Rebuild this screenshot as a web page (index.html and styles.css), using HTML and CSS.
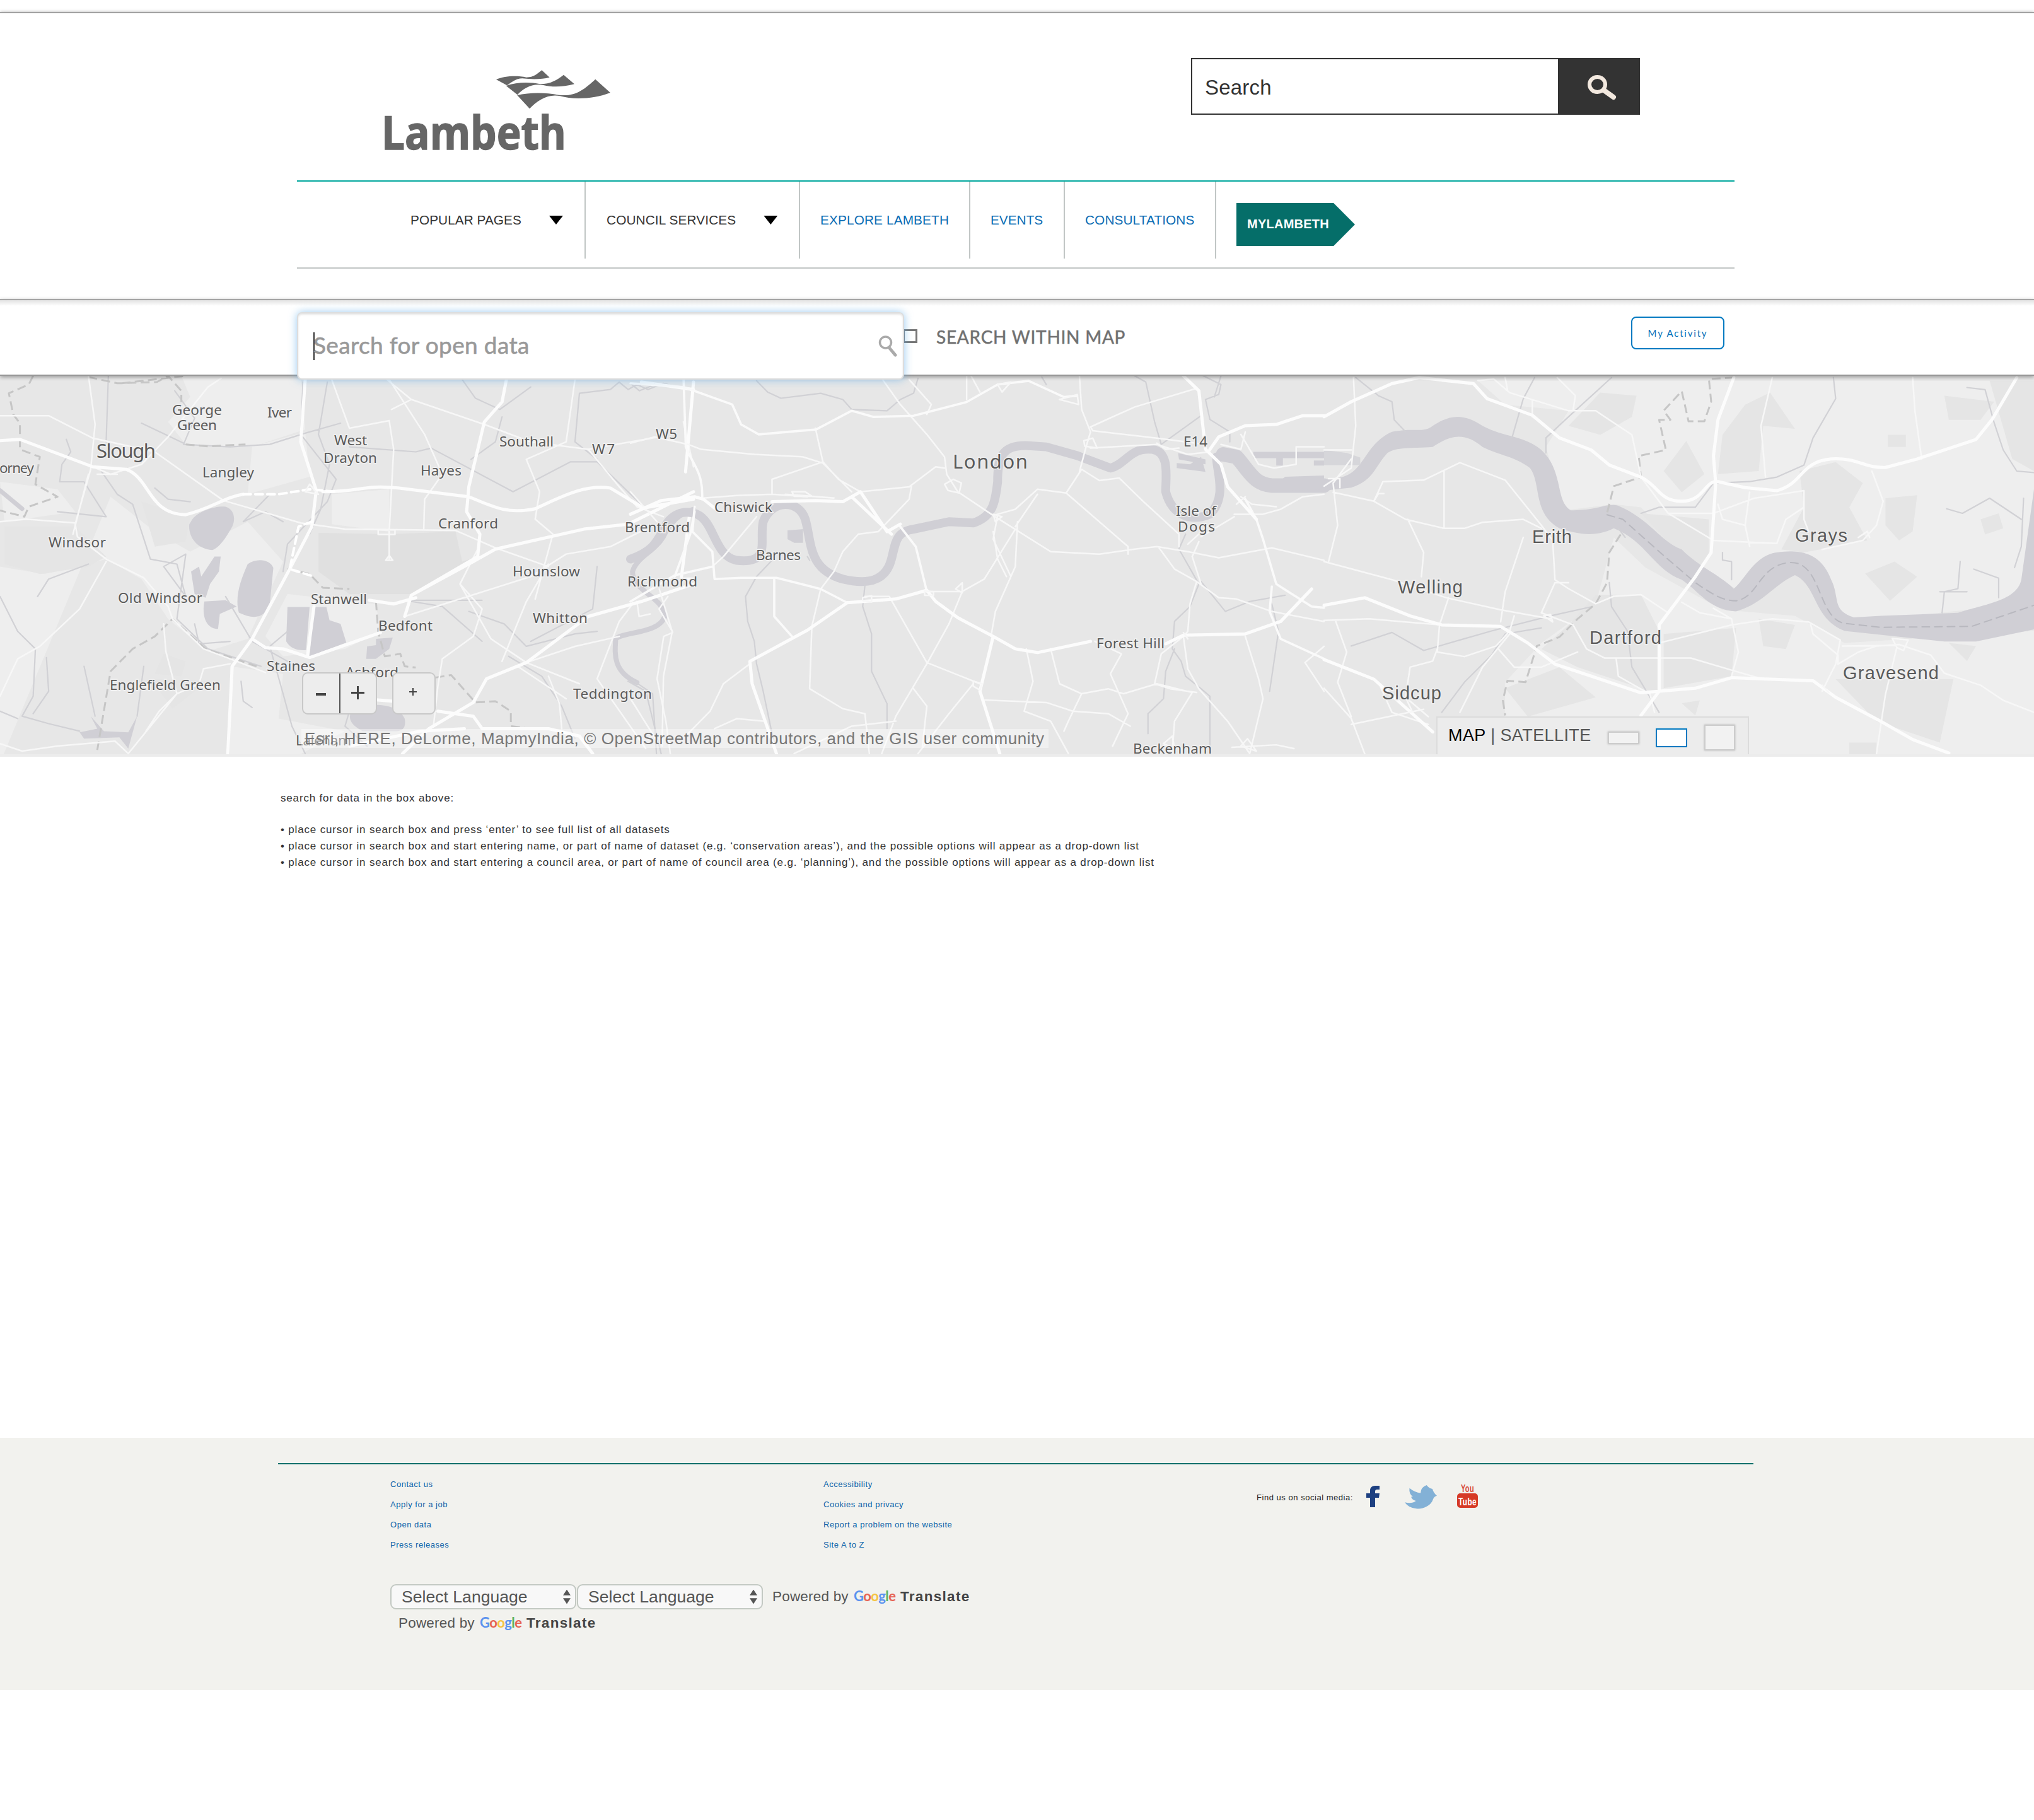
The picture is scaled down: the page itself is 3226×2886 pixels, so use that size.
FILE: index.html
```html
<!DOCTYPE html>
<html lang="en">
<head>
<meta charset="utf-8">
<title>Lambeth Open Data</title>
<link rel="stylesheet" href="styles.css">
</head>
<body>
<header class="site-header">
  <div class="masthead">
    <svg class="logo" viewBox="600 100 380 145" role="img" aria-label="Lambeth">
      <g transform="translate(580 80) scale(.3333)" fill="#666">
        <path d="M621 138C660 122 715 118 765 128C800 128 815 112 838 94L875 128C840 138 790 138 745 133C715 133 695 152 672 166Z"/>
        <path d="M668 168C715 152 775 148 830 160C880 160 910 140 942 116L993 160C940 174 890 176 845 165C790 156 752 180 722 211Z"/>
        <path d="M721 213C775 200 850 198 920 212C1000 220 1040 185 1093 137L1164 201C1090 230 990 236 925 217C870 205 820 235 780 277Z"/>
      </g>
      <text x="605" y="236.500" textLength="293" lengthAdjust="spacingAndGlyphs">Lambeth</text>
    </svg>
    <form class="site-search">
      <span class="site-search-text">Search</span>
      <span class="site-search-button">
        <svg width="48" height="42" viewBox="0 0 48 42" fill="none" stroke="#f3e9df" stroke-linecap="round"><ellipse cx="16.500" cy="16" rx="12.500" ry="12" stroke-width="6"/><path d="M28 26L42 36" stroke-width="8"/></svg>
      </span>
    </form>
  </div>
  <nav class="main-nav">
    <ul>
      <li class="popular">POPULAR PAGES<i class="arrow"></i></li>
      <li class="services">COUNCIL SERVICES<i class="arrow"></i></li>
      <li class="explore"><a>EXPLORE LAMBETH</a></li>
      <li class="events"><a>EVENTS</a></li>
      <li class="consult"><a>CONSULTATIONS</a></li>
      <li class="account"><a class="account-tag">MYLAMBETH</a></li>
    </ul>
  </nav>
</header>

<section class="data-bar">
  <div class="data-search">
    <i class="caret"></i><span class="placeholder">Search for open data</span>
    <svg width="30" height="34" viewBox="0 0 30 34" fill="none" stroke="#aaa"><circle cx="11.500" cy="11" r="9" stroke-width="3.500"/><path d="M17 19L27 31" stroke-width="5" stroke-linecap="round"/></svg>
  </div>
  <i class="checkbox"></i>
  <span class="within">SEARCH WITHIN MAP</span>
  <a class="activity">My Activity</a>
</section>

<section class="map">
  <svg class="map-canvas" viewBox="0 596 3226 604" preserveAspectRatio="none">
    <rect y="596" width="3226" height="604" fill="#e7e7e7"/>
    <!-- western area -->
    <g transform="translate(0 590) scale(.7015 .3954)">
      <path class="open" d="M410 15H680L690 230L570 300L420 290L380 200L430 100ZM570 300L690 240L700 420L560 490ZM0 440L130 470L170 560L10 600ZM250 500L350 640L430 720L560 600L640 760L560 1070L470 1120L380 990L320 830L240 750L180 780L100 810L0 780V1568H520V1180L640 1210L630 1390L780 1440L640 1568H0ZM750 490L880 470V640L750 610ZM650 890L850 930L860 1040L780 1110L640 1140L600 1060Z"/>
      <path class="field" d="M10 620H170L240 740L200 780L90 810L10 770ZM320 520L430 580L420 680L350 700ZM370 1130L420 1160L410 1220L350 1210ZM340 1230L470 1240L390 1350Z"/>
      <path class="airport" d="M720 645L880 650L1030 640L1045 760L1080 740L930 890L790 890L720 800Z"/>
      <path class="lake" d="M435 590C450 555 490 535 510 540C530 550 533 590 525 620C515 650 500 700 480 714C445 710 425 660 428 610ZM485 740L499 740L495 800L475 850L465 905L440 890L432 800L450 780L455 820ZM560 770C580 745 610 750 618 785L610 930C600 985 575 995 540 965C530 900 545 830 560 770ZM462 920L510 915L535 940L497 970L493 1030C470 1030 455 990 462 920ZM650 942H700L692 1115Q660 1120 647 1080ZM710 942H738L745 995L770 1010L783 1085L700 1140ZM830 1100L850 1095V1070L888 1065L880 1110L850 1150H828ZM800 1345C850 1325 900 1330 915 1390Q920 1440 895 1440H820Q775 1400 800 1345ZM180 1445L220 1430L205 1380L235 1440L290 1445L310 1380L290 1510L270 1465L190 1470Z"/>
      <path class="stream" d="M245 15L240 280M320 205L415 285M415 290L440 185L395 75M415 290L520 300L610 290L690 245L770 205M685 40L680 250L760 430L740 520L650 690L640 800M740 40L720 250L745 370L725 550L700 650M1045 30L1075 105L1130 150L1200 60M790 300L940 320L975 305L1160 480L1290 360L1350 360L1455 540M1135 180L1120 280L1065 350M150 270L160 320L140 370L135 440L190 440L240 580L130 560M230 400L265 490L300 530L340 750L400 770L420 900L370 780L420 730L400 990L470 1110L590 1180M610 490L550 600L600 560L640 600M510 900L570 1080L650 1160M0 900L40 1040L80 1110L75 1300L50 1380L110 1410L180 1440M200 770L110 830L85 900M105 1145L110 1280L75 1370M190 1180L215 1380M325 1180L310 1380M350 465L380 510L430 520M1150 1140L1225 1220L1270 1340L1300 1470M1060 960L1140 1010L1190 1100L1300 1050L1350 1040M1350 780L1340 950L1200 1080M1420 1240L1460 1280L1500 1568M920 915H1090M930 920L1000 940L1090 1080M1310 85L1380 70L1400 40L1420 70L1440 50L1465 70L1500 45L1510 50M1310 85L1300 280L1350 350M650 1040L610 1100L640 1290L660 1420L690 1530M545 1240L550 1320L570 1345M440 1010L450 1090L520 1080M0 1360L40 1390M790 1360L780 1420L830 1500"/>
      <path class="bound" d="M75 15L65 50L20 85L30 170L45 205V310L90 340L80 450L130 500L65 540L55 580L0 555M200 20L265 45L355 40L380 15L410 75L410 120M420 290L470 298L555 290M650 790L700 810L730 865L790 870M850 920L855 1040L870 1140L905 1130L915 1180L940 1185M985 1225L1020 1215L1075 1325L1120 1320L1155 1360V1420L1200 1430M215 1568L250 1200L300 1110L350 1060L390 990L465 1110L580 1180M275 45L420 15"/>
      <path class="river" d="M1568 550C1530 570 1510 620 1500 660C1480 720 1440 740 1430 800C1430 880 1500 900 1503 980C1490 1050 1410 1040 1392 1070C1390 1130 1385 1200 1440 1245"/>
      <path class="canal" d="M0 475L50 548"/>
      <path class="minor" d="M200 15L215 210L205 390L170 610L175 660L240 750L325 825L380 940L390 990L460 1110L535 1160L600 1205M240 760L180 950L90 1100L40 1150L0 1300M500 25L470 60L380 260L320 370L250 410L210 380M0 175H110L210 265L350 320L505 515L680 605L780 630L1030 635L1120 705L1240 780M0 600L60 590L170 605M875 30L930 110L1095 210L1200 280L1330 310L1490 260M750 30L790 225L880 195L890 310L880 640V750M885 150L930 110M880 30L960 250L1000 410L960 510L958 635M1300 30L1280 280L1190 350L1220 480L1210 590L1250 650L1210 910M1545 200L1568 380M1330 310L1400 460L1440 540L1500 580M1240 770L1190 920L1135 1160M915 980L1200 820L1280 730L1380 700L1470 620M1040 850L1110 1070L1190 1165L1310 1250M1080 710L1040 850L1090 950L1070 1060L1000 1150L990 1260L980 1420M1430 930L1400 1000L1350 1230L1460 1510M1400 1060L1300 1100L1190 1165M1510 900L1490 950L1520 1040L1500 1220L1497 1500M370 1010L375 1120L400 1290L290 1530M520 1170L460 1190L450 1250L400 1290L360 1360L330 1440M0 1490L50 1520L130 1500L260 1480L290 1530M1240 1220L1265 1330L1270 1430M200 410L165 650M1440 920L1445 980L1470 970M1170 1180L1280 1310"/>
      <path class="major" d="M0 275L45 270L210 380L285 390C340 425 335 570 420 572C480 545 510 500 550 490M730 480C820 480 820 450 900 465L1060 500C1120 545 1150 570 1210 548C1270 500 1320 450 1380 465L1455 545L1568 510M690 30L680 280L715 475L705 620L655 790L570 1070L525 1180L515 1530M1145 30L1135 120L1095 200L1060 460L1055 560L1085 650L1080 740L930 895L915 980M1568 480L1420 610L1320 630L1120 710L1070 760L930 895M570 1070L600 1105L640 1110L700 1145L860 1045M1568 850L1450 920L1330 980L1190 1165L1100 1230L1070 1325L970 1430L910 1530M820 1310L890 1320M990 1360L1070 1380L1090 1430L1240 1430L1310 1460L1340 1530M710 940L695 1140M835 915L890 930L940 905M790 1500L950 1440L1050 1430M1568 830L1540 830L1560 560M1450 40L1568 70M1568 40L1550 400"/>
      <path class="tunnel" d="M550 490H630L700 470L760 480M705 600L675 620L655 790L710 820"/>
      <path class="minor" d="M855 633h38v18h-38zM700 450l20 40l-30-10zM220 410h45M872 755l8-20l8 20z"/>
    </g>
    <!-- central area -->
    <g transform="translate(1000 590) scale(.7015 .3954)">
      <path class="thames a" d="M0 750C50 720 60 680 75 630C90 570 120 550 150 570C190 600 190 740 240 755C320 770 290 680 300 600C320 510 380 510 395 590C410 680 400 790 480 830C550 860 580 820 590 750C600 680 600 640 640 630L720 600L775 605C820 580 825 520 830 440C830 340 840 290 900 295L940 300L1010 335L1085 385C1120 370 1130 300 1180 310C1220 320 1210 420 1210 480C1225 580 1270 600 1310 570C1350 500 1325 400 1325 340"/>
      <path class="thames b" d="M1340 330L1370 340C1400 400 1410 450 1450 455H1568"/>
      <path class="lake" d="M1480 420L1568 415V470L1440 480ZM355 635L390 630V685H370L355 670ZM1238 325L1300 350V370L1240 350ZM1235 365L1265 370L1290 340L1300 400L1235 385ZM1408 320H1568V345H1475V375H1460V345H1408ZM1545 355H1568V375H1545Z"/>
      <path class="stream" d="M285 35L310 80L340 105L430 85L480 110L500 150L580 155L610 110L640 85L650 25M1140 15L1165 40L1185 200L1200 290L1290 175M1295 15L1335 50L1330 90L1300 110L1310 190L1355 240V280M1335 15L1320 100M930 20L940 50M1255 650L1240 710L1285 850L1265 940L1230 1000L1225 1110L1245 1160L1255 1220L1290 1270L1310 1300V1568M1230 1110L1210 1200L1205 1310L1170 1370V1450M320 755L285 820L260 900L265 1000L280 1080L285 1170L300 1280L320 1450L330 1530M530 855L525 940L545 1050L545 1200L580 1330L580 1430M1290 840L1345 960L1400 920L1480 895M1450 930L1465 1040L1445 1280M400 740L405 755M0 1230L50 1290L60 1568M0 45L20 75L55 50"/>
      <path class="minor" d="M0 285L55 260L130 290L160 310L280 330L390 340L435 365L500 480M435 360L320 430V490M418 225L435 360L470 430L520 480L630 460L690 380L710 385M165 505L240 495L320 490L400 500M570 30L610 130L670 250L710 340L715 410L740 480L820 575L950 720L1060 730L1140 710L1190 700L1260 720L1330 745L1450 705L1568 755M630 30L680 130L670 170M830 575L820 670L860 820M875 600L870 780L825 960L815 1060M635 460L630 510L560 640L515 650L480 720L460 800L430 870L410 1020L405 1270L480 1350L530 1370L540 1530M530 900L585 900L670 1165L790 1250M750 880L720 1010L670 1170L600 1380L560 1568M820 575L870 550L920 470L985 485L1125 700V730M985 485L1020 390L1060 435L1105 425L1160 520L1240 650V700M1015 15L1020 150L1040 240L1030 300L1015 400M1280 65L1140 140L1040 220L1045 235L1190 265L1300 290M1040 305L1190 290L1260 330L1310 320M920 490L870 620M820 640L830 750L850 820M870 630L800 830L750 880H670M1195 705L1230 790L1280 840L1265 930L1260 1040L1250 1060L1200 1130L1185 1250L1220 1270L1280 1285M1280 840L1330 905L1370 910L1450 960L1568 1000M1285 680L1270 740L1290 850M1310 610L1260 690M1365 580L1290 660M1365 570L1430 570L1470 550L1520 500L1568 490M1380 500L1405 530L1460 540M1390 1060L1420 1230L1430 1310L1400 1530M1250 1060L1260 1190L1285 1270L1350 1400L1400 1530M1050 1080L1110 1130L1085 1210L1125 1370L1090 1500M895 1110L910 1240L890 1360L950 1400L990 1530M950 1110L970 1250L1020 1290L1080 1270L1115 1290L1190 1250L1270 1285L1230 1400L1225 1520M800 1315L940 1325L1000 1360L1080 1370L1130 1420M1020 1290L990 1400L980 1440M775 1250L720 1370L650 1530M640 1270L670 1340L660 1500M270 1170L210 1250L180 1360L130 1450M300 1400L240 1390L190 1430M370 1530L500 1420L600 1400M0 480L60 600M285 580L210 740L185 780M760 15V110M790 80L770 15M65 870L95 1045L75 1060L60 1230L80 1400L90 1530M0 1310L60 1480M1568 1100L1525 1165L1568 1280M1568 300H1505V370L1455 385L1420 370L1380 250M1390 500L1370 530"/>
      <path class="road2" d="M0 45L120 60L230 130L250 210L290 250L420 230L500 155L550 180L640 175L760 120L830 50L900 35L980 100L1010 95M120 30L125 300C140 370 165 400 162 510M145 540L140 640L185 720L190 830L250 825H330L430 870L490 925M145 560L135 650L100 820M325 825V980L365 1060M610 620L645 700L670 880M1390 510L1415 590L1430 670L1460 850L1540 940L1568 945M1450 860L1445 960L1470 1070L1568 1150M0 920L100 815L185 780"/>
      <path class="major" d="M0 570L70 515L145 500L165 510L200 560M320 520L420 515L480 520L520 480L580 640L610 610M490 925L400 1035L270 1160L275 1250L330 1530M490 925L600 910L670 875L690 920L740 985L820 1060L870 1110L920 1125L1040 1080M820 1060L790 1280L835 1530M1210 1090L1250 1055L1390 1050L1470 1000L1540 870M1250 15L1285 75L1300 310L1335 370L1350 460L1415 590M1310 310L1330 260L1390 215L1460 210L1520 175H1568M500 500L590 650"/>
      <path class="minor" d="M710 450l20-20l18 15l-5 40l-25-10zM365 480h30l15 18h-40zM1025 275l20-10l10 40l-28-8zM525 905l20-8v25l-20-5zM665 878l20 3v14h-20zM735 870l15-25v40zM775 1240l20 10l-5 25l-15-15zM1250 1045l10 25M820 570l20 10l-15 20zM970 110l40-20l3 40zM830 50l10 30l20-40zM1190 285l20 25l30-5M350 490l110 15M1335 290l45 20l10-70M1205 1490l20-30l5 50zM1380 1500l15-30l20 50zM1500 1510l-40-15l-100 10"/>
    </g>
    <!-- estuary -->
    <g transform="translate(2100 460) scale(.7181 .4783)">
      <path class="open" d="M340 300H1568V680L1540 1040L1300 1080L1140 1090L1060 870L1010 880L910 990L820 920L700 720L640 710L530 730L490 520L540 400L400 380ZM640 820L710 920L880 1060L1040 1080L1150 1170L1568 1130V1568H400L400 1300L480 1170L600 1040Z"/>
      <path class="field" d="M610 340L690 350L680 420L610 480L540 450ZM930 380L985 340L1040 460L970 450L960 600L870 610L880 480ZM1050 600L1130 570L1190 640L1160 720L1200 830L1060 870L1010 860L1060 720ZM1240 690L1310 680L1300 800L1270 830L1240 780ZM1245 480H1285V520H1245ZM1195 940L1260 900L1310 950L1250 1030ZM750 600L800 500L840 610L790 670ZM1370 350L1480 370L1450 430H1380ZM1470 300H1568V600L1520 560ZM700 740L850 760V880L820 930ZM600 1010L700 1010L740 1130L740 1340L560 1250L480 1190L540 1110ZM750 1140L910 1120L900 1280L750 1320ZM1130 1290H1390L1360 1500L1220 1430ZM400 1320L520 1250L600 1350L450 1414ZM1450 760L1490 740L1500 790L1460 810ZM1160 1500H1220V1538H1160ZM790 1370L830 1360L820 1410ZM960 1090L1040 1110L1020 1190L970 1180ZM1380 1170L1440 1180L1420 1230Z"/>
      <path class="lake" d="M0 630L40 620C90 600 90 510 150 470C200 455 220 475 240 450C280 410 310 410 350 450C400 490 440 480 480 530C530 600 510 700 545 730C610 730 620 705 650 715C720 760 740 830 790 860C830 920 870 940 905 990C930 960 950 880 1000 870C1060 855 1100 880 1120 960C1140 1020 1120 1060 1170 1085L1230 1080L1400 1070C1460 1040 1530 1030 1540 960L1568 660V1125L1440 1165H1370L1150 1130C1080 1090 1090 980 1040 945C990 980 970 1040 910 1065C850 1060 830 1000 790 960C730 930 710 830 640 790C600 820 560 810 520 790C460 740 480 640 455 590C420 550 390 550 350 520C310 470 280 480 240 520C190 525 160 520 140 540C110 590 110 630 60 655L0 665Z"/>
      <path class="water" d="M0 530L50 540L80 555V580H0Z"/>
      <path class="stream" d="M70 290L120 350L150 370L155 430L180 470M465 290L440 360L415 490M635 290L540 420L490 490V540M1125 290L1130 360L1080 490L1060 580L1000 620L940 635L860 640L820 720L740 720L700 740M1420 323L1460 330L1480 440L1500 530L1530 600L1568 605M1375 725L1410 740L1470 690L1540 760M630 970L635 1050L670 1130L680 1250L740 1400M60 1180L150 1135L220 1195L300 1160L370 1130L500 1080L590 1050M480 1120L400 1140L370 1210L310 1300L260 1400M880 870V895L900 900V960M1405 900L1400 990L1370 1000L1365 1070M1435 925L1490 955V1020M1360 1000H1420M1545 690L1540 850L1525 920M650 790L665 820"/>
      <path class="bound" d="M905 290L850 295L855 370L840 435H805L790 335L750 400L765 430L740 430L755 530L695 550L700 620L640 650L625 740M655 810L630 870L625 970L600 1040L560 1090L520 1150L470 1180L445 1300L405 1295L395 1360L400 1410"/>
      <path class="channel" d="M625 745L660 760L750 880L820 970C860 1010 880 1030 910 1030C960 1020 960 910 1030 903C1100 900 1090 1090 1150 1105L1230 1118L1430 1115L1568 1045"/>
      <path class="minor" d="M65 290L70 450L60 590L0 650M60 560L20 640L30 780L10 900M20 670L110 700L130 635L220 630L300 572L400 630L480 780L505 830L510 960L540 990L600 1040L640 1015L700 1010L760 1070M265 600V790L180 760L110 700M265 790H310L350 770L440 760L480 790M185 760L220 870L215 950M440 820L400 1000L390 1100M540 970L510 970L480 1070L550 1110L580 1190L620 1220H810L900 1260L970 1290M0 900L150 960L270 1020L390 1060L500 1090M275 1020L255 1110L250 1200L310 1215L380 1180L410 1130L420 1080M250 1190L240 1230L190 1250L180 1350L230 1414M0 1095L100 1090L180 1100L260 1110M25 1095L50 1200L30 1300L60 1414M410 1140L350 1250L300 1400M385 1190L420 1250H480L560 1200M340 300L375 295L410 340L540 400L600 400L680 480L700 620L760 740L860 830L1000 840L1020 760L1060 720M400 290L405 330M460 365V420M515 290L555 350L550 400M990 290L965 450L975 620M1300 290L1305 400L1320 560M1210 600L1235 700L1220 780L1190 830L1100 860M760 740H860L950 690L1060 665V760L1070 800M940 670L930 780L940 850M870 710L880 760L930 780M860 1055L900 1090L915 1200L900 1280M790 1035L830 1070L900 1090M740 1170L900 1110L990 1090L1070 1100L1140 1160L1130 1240L1100 1330M1075 1110L1080 1140L1135 1210V1240L1180 1200L1220 1180L1270 1175L1340 1210L1370 1270L1450 1310L1500 1360L1568 1400M1265 1185L1240 1340L1220 1538M1145 1180L1260 1178M120 1300L150 1400L230 1440M0 1320L60 1420L90 1538M180 1350L200 1414M645 1220L650 1280L720 1340L730 1400"/>
      <path class="major" d="M0 420L60 370L150 310L210 290L330 310L360 360L460 415L520 490L590 530L630 580L700 620C740 650 740 700 790 700C840 700 840 630 870 635L930 655L1000 665C1060 640 1050 570 1120 560C1180 555 1190 590 1240 588L1310 560L1440 495L1475 430L1530 290M905 290L870 430L860 550L865 640L855 870L820 950L740 1110V1330M0 1045L90 1020L190 1080L260 1110L390 1115L450 1170L510 1240L590 1280L700 1335L820 1320L900 1285L1080 1295L1130 1350L1230 1430L1300 1490L1380 1535M0 1225L110 1290L240 1465M740 1330L700 1410"/>
      <path class="minor" d="M1255 1155l35 5l-10 35l-15-10zM485 1080l15-5l5 25zM10 625h25v30M110 700l10-25h12M1180 820l20-20l5 20M60 1440l160-50M0 530h60M1100 1310l15 25"/>
    </g>
    <g class="labels">
      <text x="273" y="658" textLength="79">George</text><text x="281" y="682" textLength="63">Green</text>
      <text x="424" y="662" textLength="39">Iver</text><text x="321" y="757" textLength="82">Langley</text>
      <text x="-1" y="750" textLength="55">orney</text><text x="530" y="706" textLength="52">West</text>
      <text x="513" y="734" textLength="85">Drayton</text><text x="667" y="754" textLength="65">Hayes</text>
      <text x="792" y="708" textLength="86">Southall</text><text x="939" y="720" textLength="36">W7</text>
      <text x="1040" y="696" textLength="34">W5</text><text x="695" y="838" textLength="95">Cranford</text>
      <text x="991" y="844" textLength="103">Brentford</text><text x="77" y="868" textLength="91">Windsor</text>
      <text x="187" y="956" textLength="134">Old Windsor</text><text x="493" y="958" textLength="89">Stanwell</text>
      <text x="813" y="914" textLength="107">Hounslow</text><text x="995" y="930" textLength="111">Richmond</text>
      <text x="845" y="988" textLength="87">Whitton</text><text x="600" y="1000" textLength="86">Bedfont</text>
      <text x="423" y="1064" textLength="77">Staines</text><text x="548" y="1074" textLength="84">Ashford</text>
      <text x="174" y="1094" textLength="176">Englefield Green</text><text x="909" y="1108" textLength="125">Teddington</text>
      <text x="469" y="1182" textLength="88">Laleham</text><text x="1877" y="708" textLength="38">E14</text>
      <text x="1865" y="818" textLength="64">Isle of</text><text x="1868" y="843" textLength="59">Dogs</text>
      <text x="1133" y="812" textLength="92">Chiswick</text><text x="1199" y="888" textLength="71">Barnes</text>
      <text x="1739" y="1028" textLength="108">Forest Hill</text><text x="1797" y="1195" textLength="125">Beckenham</text>
    </g>
    <g class="labels town">
      <text x="153" y="726" textLength="94">Slough</text><text x="1511" y="743" textLength="119">London</text>
    </g>
    <g class="labels east">
      <text x="2430" y="861" textLength="63">Erith</text><text x="2847" y="859" textLength="83">Grays</text>
      <text x="2217" y="941" textLength="103">Welling</text><text x="2521" y="1021" textLength="114">Dartford</text>
      <text x="2923" y="1077" textLength="152">Gravesend</text><text x="2192" y="1109" textLength="94">Sidcup</text>
    </g>
    <rect y="1196" width="3226" height="4" fill="#ececec"/>
  </svg>
  <div class="zoom-controls">
    <div class="zoom-pair"><span class="zoom-out"><i></i></span><span class="zoom-in"><i></i></span></div>
    <span class="locate"><i></i></span>
  </div>
  <div class="attribution">Esri, HERE, DeLorme, MapmyIndia, © OpenStreetMap contributors, and the GIS user community</div>
  <div class="map-type"><span><b>MAP</b> | SATELLITE</span><i class="size-s"></i><i class="size-m"></i><i class="size-l"></i></div>
</section>

<main class="help">
  <p class="intro">search for data in the box above:</p>
  <p>• place cursor in search box and press ‘enter’ to see full list of all datasets</p>
  <p>• place cursor in search box and start entering name, or part of name of dataset (e.g. ‘conservation areas’), and the possible options will appear as a drop-down list</p>
  <p>• place cursor in search box and start entering a council area, or part of name of council area (e.g. ‘planning’), and the possible options will appear as a drop-down list</p>
</main>

<footer class="site-footer">
  <div class="footer-links">
    <ul><li>Contact us</li><li>Apply for a job</li><li>Open data</li><li>Press releases</li></ul>
    <ul><li>Accessibility</li><li>Cookies and privacy</li><li>Report a problem on the website</li><li>Site A to Z</li></ul>
    <div class="social">
      <span>Find us on social media:</span>
      <svg class="facebook" width="22" height="36" viewBox="0 0 22 36"><path d="M6 35V20H0V13H6V9Q6 1 14 1H21V7H17Q14 7 14 10V13H21L20 20H14V35Z" fill="#1d4080"/></svg>
      <svg class="twitter" width="51" height="38" viewBox="803 166 150 112" preserveAspectRatio="none"><path d="M803 246Q835 255 855 240Q838 236 832 220Q838 222 840 218Q822 208 825 180Q850 200 877 203Q878 175 905 166Q915 180 932 184Q938 205 953 215Q938 220 935 232C925 262 890 278 858 276Q820 272 803 246Z" fill="#83b1d6"/></svg>
      <svg class="youtube" width="34" height="40" viewBox="0 0 34 40"><rect x="0" y="16" width="33" height="23" rx="5" fill="#d63a26"/><text x="6" y="14" textLength="21" lengthAdjust="spacingAndGlyphs" fill="#d84b3b">You</text><text x="2" y="35" textLength="29" lengthAdjust="spacingAndGlyphs" fill="#fff">Tube</text></svg>
    </div>
  </div>
  <div class="translate">
    <span class="select">Select Language<i></i></span><span class="select">Select Language<i></i></span>
    <span class="powered">Powered by</span><span class="google"><b>G</b><b>o</b><b>o</b><b>g</b><b>l</b><b>e</b></span><strong>Translate</strong>
  </div>
  <div class="translate second">
    <span class="powered">Powered by</span><span class="google"><b>G</b><b>o</b><b>o</b><b>g</b><b>l</b><b>e</b></span><strong>Translate</strong>
  </div>
</footer>
</body>
</html>
```
FILE: styles.css
```css
* { box-sizing: border-box; }
body { margin: 0; background: #fff; font-family: "Liberation Sans", Arial, sans-serif; color: #333; }
ul { list-style: none; margin: 0; padding: 0; }
p { margin: 0; }

.site-header { margin-top: 19px; height: 455px; border-top: 2px solid #a2a2a2; box-shadow: 0 0 5px rgba(0,0,0,.3); background: #fff; }
.masthead { display: flex; height: 265px; padding: 71px 625px 0 600px; justify-content: space-between; align-items: flex-start; }
.logo { width: 380px; height: 145px; margin-top: 8px; }
.logo text { font: bold 73px "Open Sans", sans-serif; fill: #666; stroke: #666; stroke-width: 1.5px; }
.site-search { display: flex; width: 712px; height: 90px; border: 2px solid #333; margin: 0; }
.site-search-text { flex: 1; padding-left: 20px; font-size: 33px; line-height: 90px; letter-spacing: .2px; }
.site-search-button { width: 128px; background: #333; display: flex; align-items: center; justify-content: center; padding: 3px 0 0 12px; }

.main-nav { margin-left: 471px; width: 2280px; height: 140px; border-top: 2px solid #00a79d; border-bottom: 2px solid #c1c6c5; }
.main-nav ul { display: flex; height: 122px; font-size: 20.8px; line-height: 121px; white-space: nowrap; }
.main-nav li { border-right: 2px solid #c1c6c5; display: flex; height: 122px; }
.main-nav a { color: #0a6cb4; }
.popular { width: 458px; padding-left: 180px; letter-spacing: .05px; }
.services { width: 340px; padding-left: 33px; letter-spacing: .12px; }
.explore { width: 270px; padding-left: 32px; letter-spacing: .12px; }
.events { width: 150px; padding-left: 32px; }
.consult { width: 240px; padding-left: 32px; letter-spacing: .1px; }
.main-nav .account { border: 0; padding: 34px 0 0 32px; }
.main-nav .account-tag { width: 188px; height: 68px; background: #056e69; clip-path: polygon(0 0, 82% 0, 100% 50%, 82% 100%, 0 100%); color: #fff; font-weight: bold; font-size: 20px; line-height: 67px; padding-left: 17px; letter-spacing: .25px; }
.arrow { width: 22px; height: 14px; background: #000; clip-path: polygon(0 0, 100% 0, 50% 100%); margin: 54px 0 0 44px; }

.data-bar { position: relative; z-index: 2; display: flex; height: 122px; padding: 21px 0 0 471px; background: linear-gradient(#e2e2e2, #fff 9px); border-top: 2px solid #a5a5a5; border-bottom: 2px solid #979797; box-shadow: 0 2px 6px rgba(0,0,0,.35); align-items: flex-start; }
.data-search { display: flex; flex: none; width: 963px; height: 107px; margin-top: -2px; background: #fff; border: 2px solid #ddd; border-radius: 8px; box-shadow: 0 0 14px rgba(102,175,233,.65), inset 0 2px 3px #e6e6e6; padding: 0 9px 0 24px; align-items: center; z-index: 1; }
.caret { width: 2px; height: 44px; background: #333; margin-right: -2px; }
.placeholder { flex: 1; font: 37px Lato, sans-serif; letter-spacing: .35px; margin-top: -4px; color: #999; -webkit-text-stroke: .6px #999; }
.checkbox { width: 23px; height: 22px; border: 3px solid #777; background: #fff; margin: 25px 0 0 -2px; }
.within { margin: 20px 0 0 30px; font: 28px/34px Lato, sans-serif; letter-spacing: .75px; color: #707070; -webkit-text-stroke: .5px #707070; }
.activity { margin: 5px 491px 0 auto; width: 148px; height: 52px; border: 2px solid #0079c1; border-radius: 8px; color: #0070ba; font: 15px/48px Lato, sans-serif; letter-spacing: 1.8px; text-align: center; }

.map { position: relative; height: 604px; }
.map-canvas { display: block; width: 100%; height: 604px; }
.map path { fill: none; stroke-linejoin: round; stroke-linecap: round; vector-effect: non-scaling-stroke; }
.map .open { fill: #eee; }
.map .field { fill: #e5e5e5; }
.map .airport { fill: #e0e0e0; }
.map .lake { fill: #d0cfd5; }
.map .water { fill: #d6d6da; }
.map .stream { stroke: #d1d1d5; stroke-width: 2.2; }
.map .bound { stroke: #c6c6c6; stroke-width: 3; stroke-linecap: butt; stroke-dasharray: 14 7; }
.map .channel { stroke: #b8b8bf; stroke-width: 2; stroke-dasharray: 12 8; }
.map .river { stroke: #d0cfd5; stroke-width: 8; }
.map .canal { stroke: #d0cfd5; stroke-width: 7; }
.map .thames { stroke: #d0cfd5; stroke-width: 14; }
.map .b { stroke-width: 23; }
.map .minor { stroke: #f7f7f7; stroke-width: 2.5; }
.map .road2 { stroke: #fafafa; stroke-width: 3.6; }
.map .major { stroke: #fcfcfc; stroke-width: 5; }
.map .tunnel { stroke: #fff; stroke-width: 4; stroke-dasharray: 12 7; }
.labels { font: 22.5px "Noto Sans", sans-serif; fill: #5a5a5a; stroke: #f0f0f0; stroke-width: 3px; paint-order: stroke; }
.labels.town { font-size: 31px; }
.labels.east { font: 29px "Liberation Sans", sans-serif; }
.zoom-controls { position: absolute; left: 479px; top: 470px; display: flex; gap: 24px; }
.zoom-pair { display: flex; width: 119px; height: 67px; border: 2px solid #c8c8c8; border-radius: 9px; background: #ededed; }
.zoom-pair span { flex: 1; display: grid; place-items: center; }
.zoom-in { border-left: 2px solid #555; }
.zoom-out i { width: 16px; height: 4px; background: #444; margin-top: 2px; }
.zoom-in i, .locate i { background: linear-gradient(#444,#444) center/100% 3px no-repeat, linear-gradient(#444,#444) center/3px 100% no-repeat; width: 21px; height: 21px; margin-top: -2px; }
.locate { width: 69px; height: 67px; border: 2px solid #c8c8c8; border-radius: 9px; background: #ededed; display: grid; place-items: center; }
.locate i { width: 12px; height: 12px; margin: -6px 4px 0 0; background-size: 100% 2px, 2px 100%; }
.attribution { position: absolute; left: 478px; top: 560px; height: 30px; width: 1185px; padding-left: 5px; background: rgba(255,255,255,.4); font-size: 26px; line-height: 30px; letter-spacing: .6px; color: #777; white-space: nowrap; }
.map-type { position: absolute; left: 2278px; top: 540px; width: 496px; height: 60px; border: 2px solid #dcdcdc; border-bottom: 0; background: #ececec; display: flex; align-items: center; padding-left: 17px; font-size: 27px; color: #555; }
.map-type span { width: 253px; white-space: nowrap; letter-spacing: .4px; margin-top: -1px; }
.map-type b { font-weight: normal; color: #000; }
.map-type i { border: 2px solid #ccc; background: #f2f2f2; box-shadow: 0 0 3px #bbb; }
.map-type .size-s { width: 50px; height: 20px; margin-top: 5px; }
.map-type .size-m { width: 50px; height: 30px; margin: 5px 27px 0 26px; border-color: #0079c1; background: #fff; box-shadow: none; }
.map-type .size-l { width: 49px; height: 41px; margin-top: 5px; }

.help { height: 1080px; padding: 53px 0 0 445px; font-size: 17px; line-height: 26px; letter-spacing: .83px; white-space: nowrap; }
.intro { margin-bottom: 24px; }

.site-footer { height: 400px; background: #f2f2ee; padding: 40px 445px 0 441px; }
.footer-links { border-top: 2px solid #00706a; height: 192px; padding: 16px 0 0 178px; display: flex; }
.footer-links ul { width: 687px; color: #0a62a9; font-size: 13px; line-height: 32px; letter-spacing: .53px; }
.social { display: flex; align-items: flex-start; font-size: 13px; line-height: 32px; letter-spacing: .53px; color: #222; }
.social span { width: 174px; margin-top: 21px; white-space: nowrap; }
.facebook { margin-top: 17px; }
.twitter { margin: 17px 0 0 39px; }
.youtube { margin: 14px 0 0 32px; }
.youtube text { font: bold 17px "Liberation Sans", sans-serif; }
.translate { display: flex; height: 40px; padding-left: 178px; align-items: center; white-space: nowrap; color: #555; }
.select { display: flex; justify-content: space-between; align-items: center; width: 295px; height: 40px; border: 2px solid #c3c9c3; border-radius: 9px; background: #f8f8f8; padding: 0 7px 0 16px; font-size: 26.6px; margin-right: 1px; }
.select i { width: 12px; height: 23px; background: #555; clip-path: polygon(50% 0, 100% 40%, 0 40%, 0 60%, 100% 60%, 50% 100%, 0 60%, 0 40%); }
.powered { font-size: 22.5px; width: 129px; margin-left: 14px; letter-spacing: .2px; }
.google { font: 22px Lato, sans-serif; width: 74px; letter-spacing: -.6px; margin-top: -4px; }
.google b { font-weight: 700; color: #5c93ee; }
.google b:nth-child(2), .google b:nth-child(6) { color: #e66454; }
.google b:nth-child(3) { color: #f5c342; }
.google b:nth-child(5) { color: #58b368; }
.translate strong { font-size: 22.5px; color: #444; letter-spacing: 1.3px; }
.second { margin-top: 2px; padding-left: 177px; }
```
